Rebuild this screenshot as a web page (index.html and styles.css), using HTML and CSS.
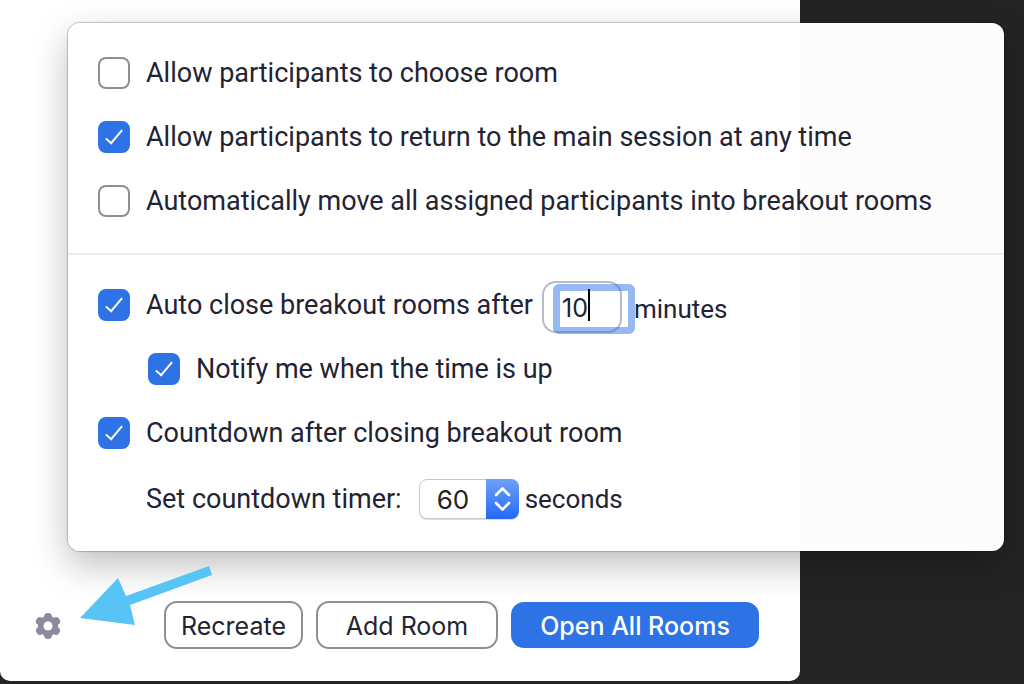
FILE: index.html
```html
<!DOCTYPE html>
<html lang="en">
<head>
    <meta charset="UTF-8">
    <meta name="viewport" content="width=device-width, initial-scale=1.0">
    <title>Breakout Rooms</title>
    <link rel="stylesheet" href="styles.css">
</head>
<body>
    <div class="window">
        <div class="footer">
            <button class="gear" aria-label="Options">
                <svg width="26" height="28" viewBox="0 0 26 28">
                    <g stroke="#8b8a9f" stroke-width="8" stroke-linecap="round">
                        <path d="M13 6V24M5 10.300L21 19.700M21 10.300L5 19.700"/>
                    </g>
                    <circle cx="13" cy="15" r="10.200" fill="#8b8a9f"/>
                    <circle cx="13" cy="15" r="4.500" fill="#fff"/>
                </svg>
            </button>
            <svg class="arrow" width="134" height="62" viewBox="0 0 134 62">
                <path d="M0 53L38 13L46 31L129 1L132 10L50 40L55 60Z" fill="#58c4f6"/>
            </svg>
            <div class="buttons">
                <button class="btn btn-recreate">Recreate</button>
                <button class="btn btn-add">Add Room</button>
                <button class="btn btn-open">Open All Rooms</button>
            </div>
        </div>
    </div>

    <div class="popover">
        <div class="section">
            <div class="row">
                <input type="checkbox" id="choose">
                <label for="choose">Allow participants to choose room</label>
            </div>
            <div class="row">
                <input type="checkbox" id="return" checked>
                <label for="return">Allow participants to return to the main session at any time</label>
            </div>
            <div class="row">
                <input type="checkbox" id="move">
                <label for="move">Automatically move all assigned participants into breakout rooms</label>
            </div>
        </div>
        <div class="section">
            <div class="row">
                <input type="checkbox" id="autoclose" checked>
                <label for="autoclose">Auto close breakout rooms after</label>
                <span class="minutes-field">
                    <input type="text" id="minutes" value="10" aria-label="Minutes until rooms close">
                </span>
                <label class="unit unit-minutes" for="minutes">minutes</label>
            </div>
            <div class="row row-indent">
                <input type="checkbox" id="notify" checked>
                <label for="notify">Notify me when the time is up</label>
            </div>
            <div class="row">
                <input type="checkbox" id="countdown" checked>
                <label for="countdown">Countdown after closing breakout room</label>
            </div>
            <div class="row row-timer">
                <label for="timer">Set countdown timer:</label>
                <span class="timer-select">
                    <select id="timer">
                        <option>10</option>
                        <option>30</option>
                        <option selected>60</option>
                        <option>120</option>
                    </select>
                    <svg width="33" height="40" viewBox="0 0 33 40">
                        <path d="M10 16L16.500 9.500L23 16M10 24L16.500 30.500L23 24" fill="none" stroke="#fff" stroke-width="2.600" stroke-linecap="round" stroke-linejoin="round"/>
                    </svg>
                </span>
                <span class="unit">seconds</span>
            </div>
        </div>
    </div>
</body>
</html>
```
FILE: styles.css
```css
* {
    box-sizing: border-box;
}
body {
    margin: 0;
    min-height: 100vh;
    background-color: #242424;
    color: #232333;
    font-family: Roboto, "Liberation Sans", sans-serif;
    font-size: 27px;
    line-height: 32px;
    position: relative;
    overflow: hidden;
}
.window {
    display: flex;
    flex-direction: column;
    justify-content: flex-end;
    min-height: calc(100vh - 3px);
    margin-right: 224px;
    background-color: #fff;
    border-radius: 0 0 10px 10px;
}
.footer {
    display: flex;
    justify-content: space-between;
    align-items: center;
    padding: 0 41px 32px 35px;
    position: relative;
}
.gear {
    display: flex;
    padding: 0;
    border: none;
    background: none;
    cursor: pointer;
}
.arrow {
    position: absolute;
    left: 80px;
    top: -36px;
    z-index: 2;
}
.buttons {
    display: flex;
    align-items: center;
    gap: 13px;
}
.btn {
    height: 48px;
    padding: 2px 0 0;
    border: 2px solid #8e8e96;
    border-radius: 13px;
    background-color: #fff;
    color: #232333;
    font-family: Inter, "Liberation Sans", sans-serif;
    font-size: 25px;
    white-space: nowrap;
    cursor: pointer;
}
.btn-recreate {
    width: 139px;
}
.btn-add {
    width: 182px;
}
.btn-open {
    width: 248px;
    height: 46px;
    border: none;
    background-color: #2e73e6;
    color: #fff;
    font-weight: 500;
}

/* Options panel, floats over the window */
.popover {
    position: absolute;
    top: 23px;
    left: 68px;
    right: 20px;
    border-radius: 12px;
    background-color: rgba(255, 255, 255, 0.99);
    box-shadow: 0 0 1px 1px rgba(0, 0, 0, 0.22), 0 14px 36px rgba(0, 0, 0, 0.26);
}
.section {
    padding: 18px 30px 20px;
}
.section + .section {
    border-top: 2px solid #ebebf1;
    padding-bottom: 18px;
}
.row {
    display: flex;
    align-items: center;
    height: 64px;
    white-space: nowrap;
}
.row-indent {
    padding-left: 50px;
}
.row-timer {
    height: 68px;
    padding-left: 48px;
}
.unit {
    font-size: 26px;
}

input[type="checkbox"] {
    appearance: none;
    flex: none;
    width: 32px;
    height: 32px;
    margin: 0 16px 0 0;
    border: 2px solid #8e8e96;
    border-radius: 8px;
    background-color: #fff;
    position: relative;
    cursor: pointer;
}
input[type="checkbox"]:checked {
    border-color: #2e73e6;
    background-color: #2e73e6;
}
input[type="checkbox"]:checked::before {
    content: '';
    position: absolute;
    left: 10px;
    top: 3px;
    width: 6px;
    height: 16px;
    border: solid #fff;
    border-width: 0 2px 2px 0;
    transform: rotate(40deg);
}

.minutes-field {
    flex: none;
    width: 80px;
    height: 52px;
    margin: 4px 12px 0 9px;
    border: 2px solid #babacc;
    border-radius: 14px;
    position: relative;
}
.minutes-field input {
    width: 82px;
    height: 50px;
    margin: 1px 0 0 9px;
    padding: 0 2px 2px;
    border: 7px solid rgba(46, 115, 230, 0.5);
    border-radius: 6px;
    outline: none;
    background: none;
    color: #232323;
    font-family: Inter, "Liberation Sans", sans-serif;
    font-size: 25px;
    display: block;
}
/* text cursor */
.minutes-field::after {
    content: '';
    position: absolute;
    left: 44px;
    top: 6px;
    width: 2px;
    height: 32px;
    background-color: #000;
}
.unit-minutes {
    margin-top: 8px;
}

.timer-select {
    flex: none;
    width: 100px;
    height: 40px;
    margin: 0 6px 0 17px;
    position: relative;
}
.timer-select select {
    appearance: none;
    width: 100%;
    height: 100%;
    padding: 0 0 0 17px;
    border: 1px solid #c8c8c8;
    border-radius: 8px;
    background-color: #fff;
    box-shadow: 0 1px 1px rgba(0, 0, 0, 0.15);
    color: #232323;
    font-family: Inter, "Liberation Sans", sans-serif;
    font-size: 26px;
}
.timer-select svg {
    position: absolute;
    top: 0;
    right: 0;
    border-radius: 0 8px 8px 0;
    background: linear-gradient(#6fa2f5, #2369f5);
    pointer-events: none;
}
```
